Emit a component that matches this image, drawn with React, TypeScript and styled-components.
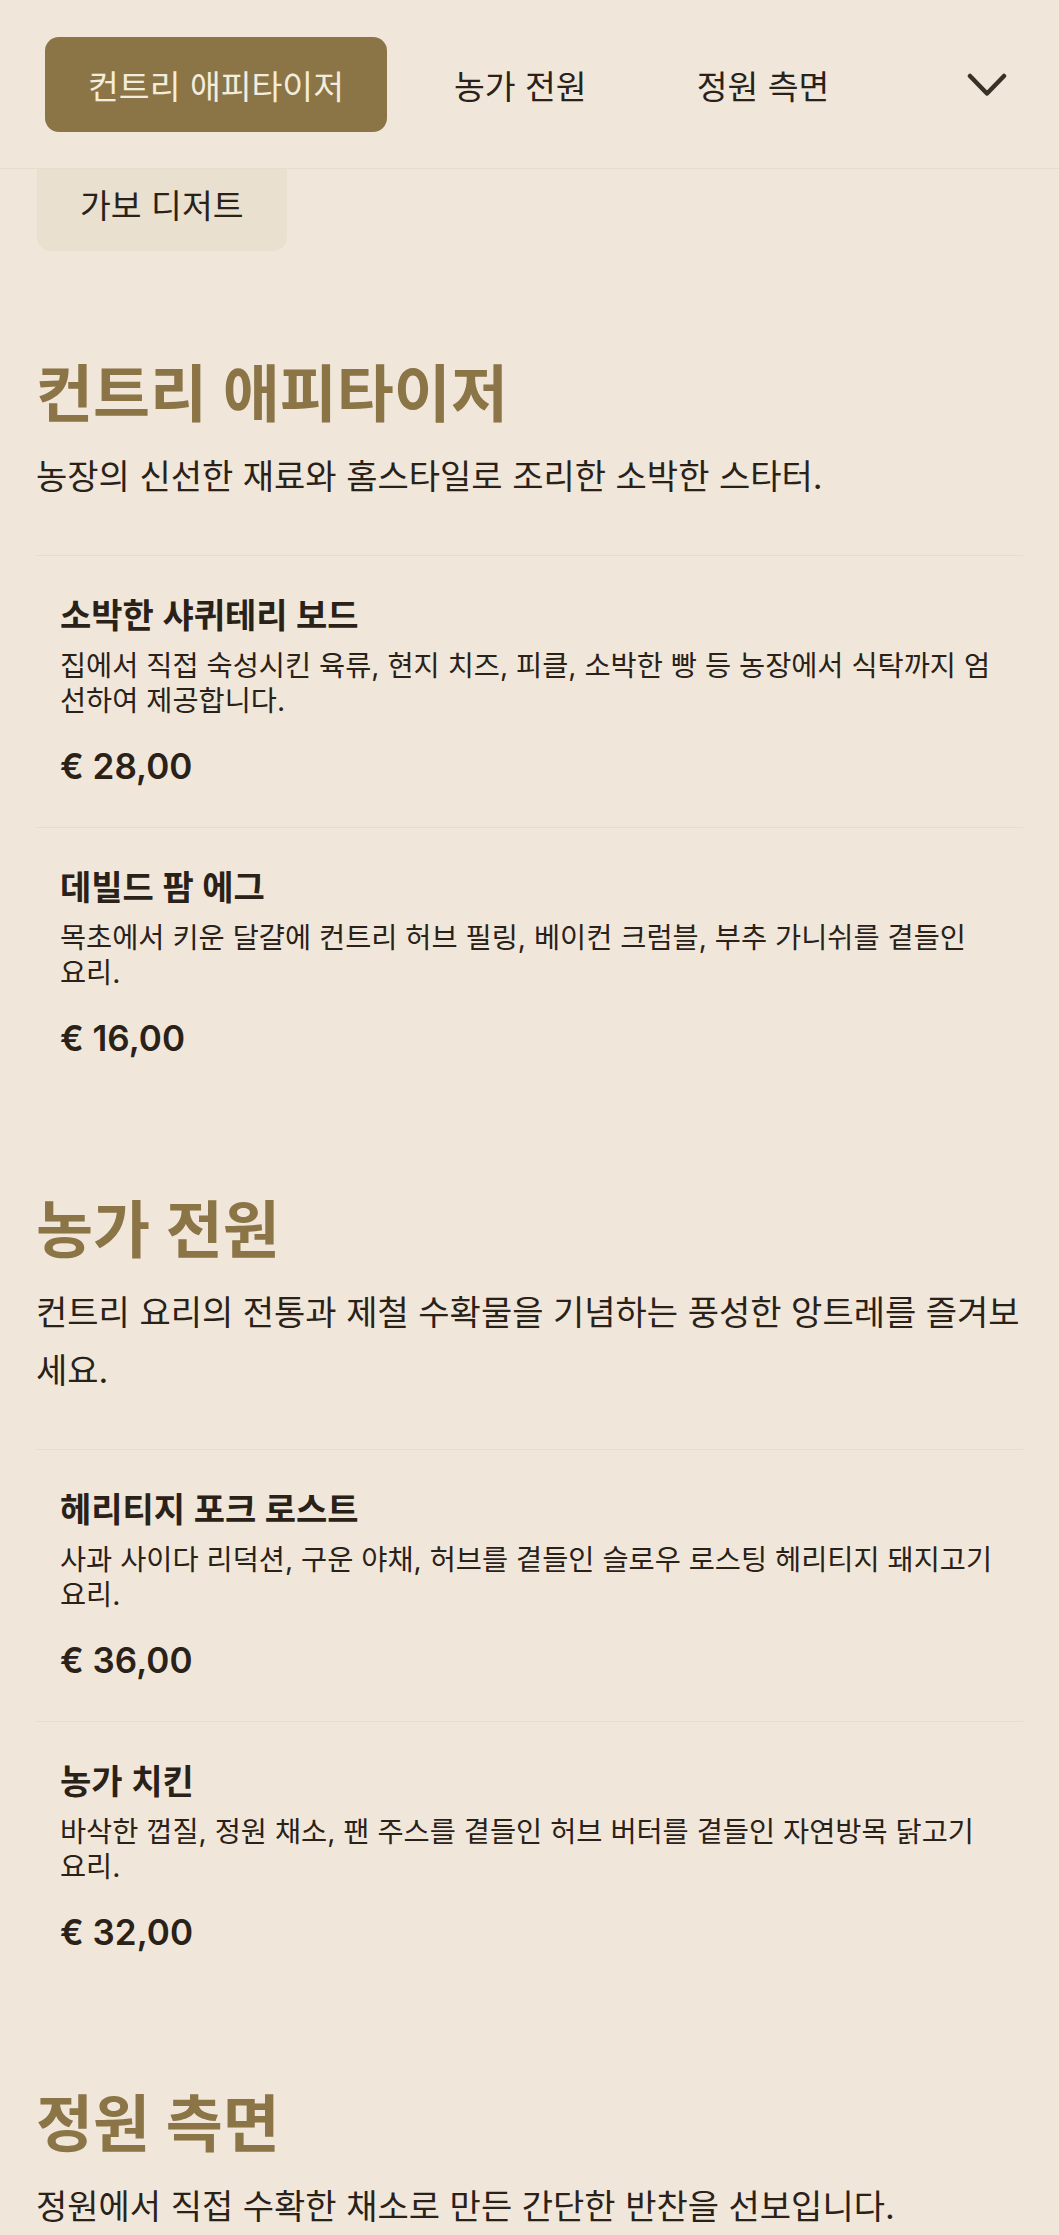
import React from "react";
import styled, { createGlobalStyle } from "styled-components";

const GlobalStyle = createGlobalStyle`
  html, body {
    margin: 0;
    padding: 0;
    background: #f0e7da;
  }
  body {
    font-family: "Inter", "Noto Sans CJK KR", sans-serif;
    color: #2a2219;
    -webkit-font-smoothing: antialiased;
  }
`;

const Page = styled.div`
  position: relative;
  min-height: 2235px;
  background: #f0e7da;
`;

const Header = styled.header`
  position: relative;
  z-index: 2;
  box-sizing: border-box;
  height: 169px;
  padding: 37px 52px 0 45px;
  background: #f0e7da;
  border-bottom: 1px solid #e7ddcd;
  display: flex;
  align-items: flex-start;
`;

const TabRow = styled.nav`
  display: flex;
  align-items: center;
  gap: 24px;
  flex: 1;
`;

const Tab = styled.button<{ $variant?: "active" | "plain" | "muted" }>`
  box-sizing: border-box;
  height: 95px;
  padding: 0 43px;
  border: none;
  border-radius: 14px;
  display: flex;
  align-items: center;
  font-family: "Inter", "Noto Sans CJK KR", sans-serif;
  font-size: 33.5px;
  font-weight: 400;
  white-space: nowrap;
  cursor: pointer;
  background: ${(p) =>
    p.$variant === "active" ? "#8b7446" : p.$variant === "muted" ? "#e9e0cf" : "transparent"};
  color: ${(p) => (p.$variant === "active" ? "#f4ecdc" : "#2a2219")};
`;

const MoreButton = styled.button`
  margin-left: auto;
  height: 95px;
  padding: 0;
  border: none;
  background: transparent;
  display: flex;
  align-items: center;
  cursor: pointer;
`;

const OverflowMenu = styled.div`
  position: absolute;
  z-index: 1;
  top: 156px;
  left: 37px;
`;

const Main = styled.main`
  padding: 94px 36px 0 36px;
`;

const Section = styled.section`
  padding-top: 98px;
`;

const SectionTitle = styled.h2`
  margin: 0 0 19px;
  font-size: 62px;
  line-height: 68px;
  font-weight: 600;
  color: #8b7446;
`;

const SectionDesc = styled.p`
  margin: 0 0 49px;
  font-size: 34px;
  line-height: 58px;
  font-weight: 400;
  color: #2a2219;
`;

const Item = styled.article`
  border-top: 1px solid #e7ddcd;
  padding: 40px 24px 38px;
`;

const ItemName = styled.h3`
  margin: 0;
  font-size: 34px;
  line-height: 40px;
  font-weight: 600;
  color: #2a2219;
`;

const ItemDesc = styled.p`
  margin: 12px 0 0;
  font-size: 28.4px;
  line-height: 35px;
  font-weight: 400;
  color: #2a2219;
`;

const Price = styled.div`
  margin-top: 25px;
  font-size: 35px;
  line-height: 46px;
  font-weight: 600;
  color: #2a2219;
`;

type MenuItem = { name: string; desc: string[]; price: string };
type MenuSection = { title: string; desc: string[]; items: MenuItem[] };

const sections: MenuSection[] = [
  {
    title: "컨트리 애피타이저",
    desc: ["농장의 신선한 재료와 홈스타일로 조리한 소박한 스타터."],
    items: [
      {
        name: "소박한 샤퀴테리 보드",
        desc: [
          "집에서 직접 숙성시킨 육류, 현지 치즈, 피클, 소박한 빵 등 농장에서 식탁까지 엄",
          "선하여 제공합니다.",
        ],
        price: "€ 28,00",
      },
      {
        name: "데빌드 팜 에그",
        desc: ["목초에서 키운 달걀에 컨트리 허브 필링, 베이컨 크럼블, 부추 가니쉬를 곁들인", "요리."],
        price: "€ 16,00",
      },
    ],
  },
  {
    title: "농가 전원",
    desc: ["컨트리 요리의 전통과 제철 수확물을 기념하는 풍성한 앙트레를 즐겨보", "세요."],
    items: [
      {
        name: "헤리티지 포크 로스트",
        desc: ["사과 사이다 리덕션, 구운 야채, 허브를 곁들인 슬로우 로스팅 헤리티지 돼지고기", "요리."],
        price: "€ 36,00",
      },
      {
        name: "농가 치킨",
        desc: ["바삭한 껍질, 정원 채소, 팬 주스를 곁들인 허브 버터를 곁들인 자연방목 닭고기", "요리."],
        price: "€ 32,00",
      },
    ],
  },
  {
    title: "정원 측면",
    desc: ["정원에서 직접 수확한 채소로 만든 간단한 반찬을 선보입니다."],
    items: [],
  },
];

const Lines = ({ lines }: { lines: string[] }) => (
  <>
    {lines.map((l, i) => (
      <React.Fragment key={i}>
        {i > 0 && <br />}
        {l}
      </React.Fragment>
    ))}
  </>
);

const Chevron = () => (
  <svg width="40" height="24" viewBox="0 0 40 24" fill="none" aria-hidden="true">
    <polyline
      points="3,3 20,20.5 37,3"
      stroke="#3a3126"
      strokeWidth="4.5"
      strokeLinecap="round"
      strokeLinejoin="round"
    />
  </svg>
);

export default function App() {
  return (
    <>
      <GlobalStyle />
      <Page>
        <Header>
          <TabRow>
            <Tab $variant="active">컨트리 애피타이저</Tab>
            <Tab $variant="plain">농가 전원</Tab>
            <Tab $variant="plain">정원 측면</Tab>
          </TabRow>
          <MoreButton aria-label="더 보기">
            <Chevron />
          </MoreButton>
        </Header>
        <OverflowMenu>
          <Tab $variant="muted">가보 디저트</Tab>
        </OverflowMenu>
        <Main>
          {sections.map((s) => (
            <Section key={s.title}>
              <SectionTitle>{s.title}</SectionTitle>
              <SectionDesc>
                <Lines lines={s.desc} />
              </SectionDesc>
              {s.items.map((it) => (
                <Item key={it.name}>
                  <ItemName>{it.name}</ItemName>
                  <ItemDesc>
                    <Lines lines={it.desc} />
                  </ItemDesc>
                  <Price>{it.price}</Price>
                </Item>
              ))}
            </Section>
          ))}
        </Main>
      </Page>
    </>
  );
}
